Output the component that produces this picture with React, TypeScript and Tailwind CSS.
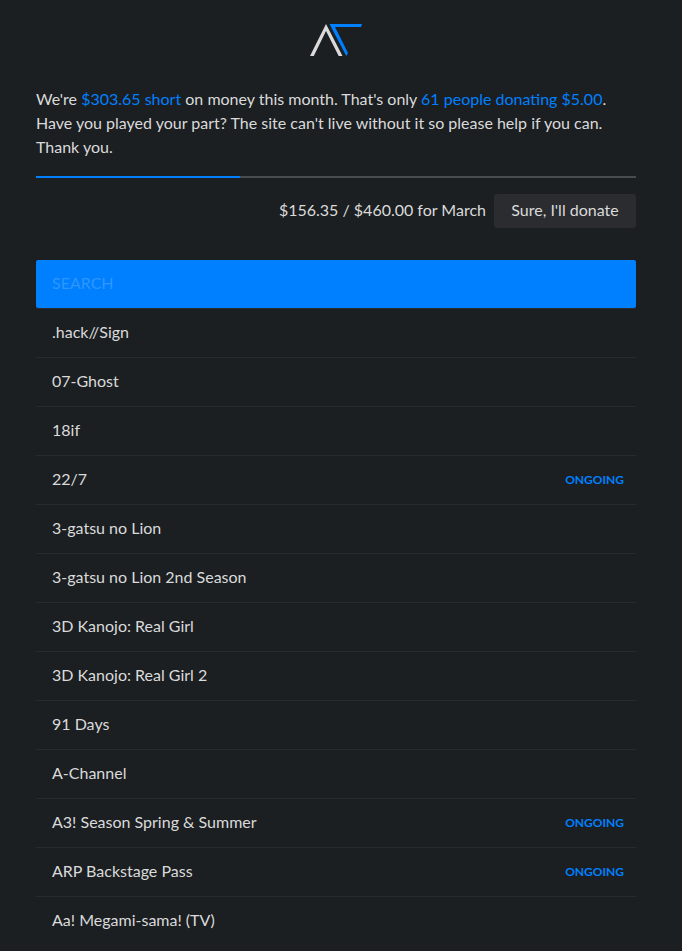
const shows: { title: string; ongoing?: boolean }[] = [
  { title: ".hack//Sign" },
  { title: "07-Ghost" },
  { title: "18if" },
  { title: "22/7", ongoing: true },
  { title: "3-gatsu no Lion" },
  { title: "3-gatsu no Lion 2nd Season" },
  { title: "3D Kanojo: Real Girl" },
  { title: "3D Kanojo: Real Girl 2" },
  { title: "91 Days" },
  { title: "A-Channel" },
  { title: "A3! Season Spring & Summer", ongoing: true },
  { title: "ARP Backstage Pass", ongoing: true },
  { title: "Aa! Megami-sama! (TV)" },
];

function Logo() {
  return (
    <svg width="52" height="32" viewBox="0 0 52 32" fill="none">
      <path d="M0 32L16 0L32.5 32H28.7L16 7L3.8 32Z" fill="#dadada" />
      <path d="M19.5 0H52L51 3H25L38 29L36.3 32Z" fill="#0080ff" />
    </svg>
  );
}

export default function App() {
  return (
    <div className="h-[951px] overflow-hidden bg-[#1b1f22] pl-9 pr-[46px] pt-6 font-['Lato',sans-serif] text-base leading-6 text-[#dadada]">
      <header className="flex h-8 justify-center">
        <Logo />
      </header>
      <p className="mt-[31px]">
        We're <span className="text-[#0080ff]">$303.65 short</span> on money this month. That's only{" "}
        <span className="text-[#0080ff]">61 people donating $5.00</span>. Have you played your part? The site can't live
        without it so please help if you can. Thank you.
      </p>
      <div className="mt-[17px] h-[2px] bg-[#494c4e]">
        <div className="h-full w-[34%] bg-[#0080ff]" />
      </div>
      <div className="mt-4 flex items-center justify-end gap-2">
        <span className="pb-0.5">$156.35 / $460.00 for March</span>
        <button className="h-[34px] w-[142px] rounded-[3px] bg-[#2a2c30] pb-0.5">Sure, I'll donate</button>
      </div>
      <input
        placeholder="SEARCH"
        className="mt-8 block h-12 w-full rounded-[2px] bg-[#0080ff] px-4 pb-[3px] placeholder:text-[#2e96ff]"
      />
      <ul>
        {shows.map((show) => (
          <li key={show.title} className="flex h-[49px] items-center justify-between border-t border-[#272b2e] pl-4 pr-3">
            <span className="pb-0.5">{show.title}</span>
            {show.ongoing && <span className="text-xs font-bold text-[#0080ff]">ONGOING</span>}
          </li>
        ))}
      </ul>
    </div>
  );
}
